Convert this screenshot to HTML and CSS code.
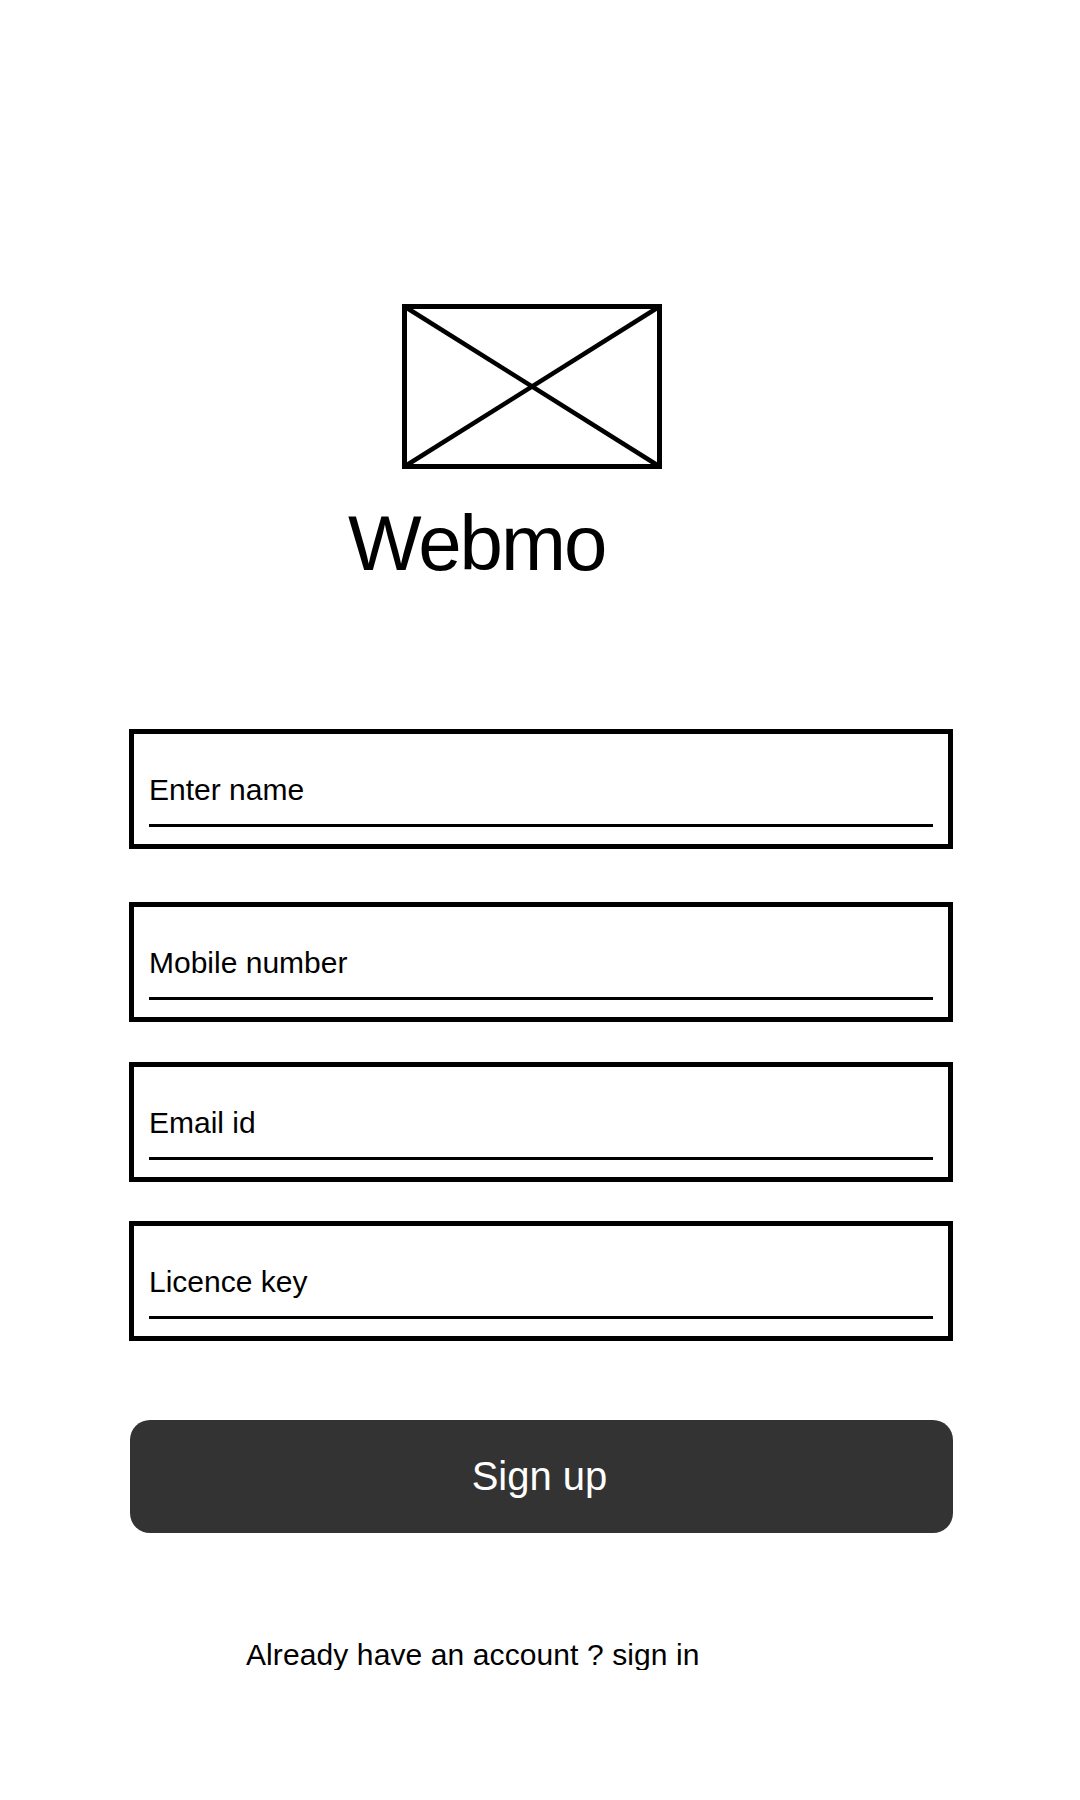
FILE: index.html
```html
<!DOCTYPE html>
<html lang="en">
<head>
<meta charset="utf-8">
<title>Webmo - Sign up</title>
<link rel="stylesheet" href="styles.css">
</head>
<body>
<main class="page">
  <div class="logo">
    <svg width="260" height="165" viewBox="0 0 260 165" xmlns="http://www.w3.org/2000/svg">
      <rect x="2.5" y="2.5" width="255" height="160" fill="none" stroke="#000" stroke-width="5"/>
      <line x1="2.5" y1="2.5" x2="257.5" y2="162.5" stroke="#000" stroke-width="4.5"/>
      <line x1="257.5" y1="2.5" x2="2.5" y2="162.5" stroke="#000" stroke-width="4.5"/>
    </svg>
  </div>
  <h1 class="brand">Webmo</h1>
  <form class="form">
    <div class="field field-1"><span class="label">Enter name</span></div>
    <div class="field field-2"><span class="label">Mobile number</span></div>
    <div class="field field-3"><span class="label">Email id</span></div>
    <div class="field field-4"><span class="label">Licence key</span></div>
    <div class="button">Sign up</div>
  </form>
  <p class="signin">Already have an account ? sign in</p>
</main>
</body>
</html>
```
FILE: styles.css
```css
html, body {
  margin: 0;
  padding: 0;
  background: #ffffff;
}
body {
  font-family: "Liberation Sans", Arial, sans-serif;
  color: #000000;
}
.page {
  width: 1080px;
  padding-top: 304px;
  box-sizing: border-box;
}
.logo {
  margin-left: 402px;
  height: 165px;
}
.logo svg {
  display: block;
}
.brand {
  margin: 35px 0 0 348px;
  font-size: 78px;
  line-height: 78px;
  font-weight: normal;
  letter-spacing: -2px;
}
.form {
  margin: 147px 0 0 129px;
  width: 824px;
  display: flex;
  flex-direction: column;
}
.field {
  box-sizing: border-box;
  height: 120px;
  border: 5px solid #000;
  padding: 0 15px 17px 15px;
  display: flex;
  flex-direction: column;
  justify-content: flex-end;
}
.field-2 { margin-top: 53px; }
.field-3 { margin-top: 40px; }
.field-4 { margin-top: 39px; }
.label {
  display: block;
  font-size: 30px;
  line-height: 30px;
  padding-bottom: 19px;
  border-bottom: 3px solid #000;
}
.button {
  margin-top: 79px;
  margin-left: 1px;
  height: 113px;
  border-radius: 20px;
  background: #333333;
  color: #ffffff;
  font-size: 40px;
  padding-right: 4px;
  display: flex;
  align-items: center;
  justify-content: center;
}
.signin {
  margin: 107px 0 0 246px;
  font-size: 30px;
  line-height: 30px;
  letter-spacing: 0.1px;
}
```
